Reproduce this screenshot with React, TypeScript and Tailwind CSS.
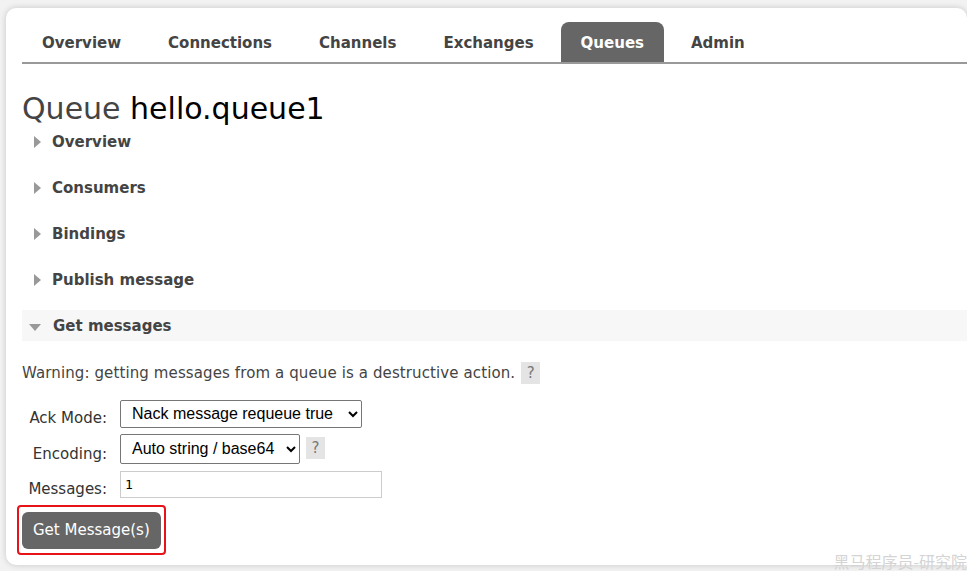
import React from 'react';

const tabs = ['Overview', 'Connections', 'Channels', 'Exchanges', 'Queues', 'Admin'];
const sections = ['Overview', 'Consumers', 'Bindings', 'Publish message'];

function Caret({ open }: { open?: boolean }) {
  if (open) {
    return (
      <svg width="14" height="10" viewBox="0 0 14 10" className="mr-[11px]">
        <polygon points="1,2 13,2 7,9" fill="#999" />
      </svg>
    );
  }
  return (
    <svg width="10" height="14" viewBox="0 0 10 14" className="mr-[10px] ml-[2px]">
      <polygon points="2,1 9,7 2,13" fill="#999" />
    </svg>
  );
}

function Help() {
  return (
    <span className="inline-flex h-[22px] w-[19px] items-center justify-center bg-[#e4e4e4] text-[15px] text-[#777]">
      ?
    </span>
  );
}

const selectFont = { fontFamily: '"Liberation Sans", Arial, sans-serif' };

export default function App() {
  return (
    <div
      className="h-[571px] w-[967px] overflow-hidden bg-[#f2f2f2] pt-[8px] pl-[6px]"
      style={{ fontFamily: '"DejaVu Sans", Verdana, sans-serif' }}
    >
      <div className="h-[557px] w-[961px] rounded-l-[10px] rounded-tr-[10px] bg-white pl-[16px] shadow-[0_0_6px_rgba(0,0,0,0.18)]">
        {/* tabs */}
        <div className="flex border-b-2 border-[#999] pt-[14px]">
          {tabs.map((t) => (
            <div
              key={t}
              className={
                t === 'Queues'
                  ? 'mr-[7px] flex h-[40px] items-center rounded-t-[8px] bg-[#666] px-[20px] pt-[2px] text-[15px] font-bold text-white'
                  : 'mr-[7px] flex h-[40px] items-center px-[20px] pt-[2px] text-[15px] font-bold text-[#444]'
              }
            >
              {t}
            </div>
          ))}
        </div>

        <h1 className="mt-[27px] text-[30px] leading-[36px] text-[#444]">
          Queue <span className="text-black">hello.queue1</span>
        </h1>

        <div className="mt-[5px]">
          {sections.map((s) => (
            <div key={s} className="flex h-[46px] items-start pl-[8px] text-[15px] font-bold text-[#444]">
              <div className="flex h-[20px] items-center">
                <Caret />
                <span>{s}</span>
              </div>
            </div>
          ))}
          <div className="mt-[-6px] flex h-[31px] items-center bg-[#f7f7f7] pt-[2px] pl-[6px] text-[15px] font-bold text-[#444]">
            <Caret open />
            <span>Get messages</span>
          </div>
        </div>

        <div className="mt-[21px] flex items-center gap-[6px] text-[15px] tracking-[0.11px] text-[#444]">
          <span>Warning: getting messages from a queue is a destructive action.</span>
          <Help />
        </div>

        <div className="mt-[15px] flex flex-col gap-[6px] text-[15px] leading-[20px] text-[#333]">
          <div className="flex items-start">
            <span className="mt-[8px] w-[98px] pr-[13px] text-right">Ack Mode:</span>
            <select
              className="h-[28px] w-[242px] rounded-[2px] border border-[#767676] bg-white pr-[2px] pl-[7px] text-[16px] text-black"
              style={selectFont}
              defaultValue="nack"
            >
              <option value="nack">Nack message requeue true</option>
            </select>
          </div>
          <div className="flex items-start">
            <span className="mt-[10px] w-[98px] pr-[13px] text-right">Encoding:</span>
            <select
              className="h-[30px] w-[180px] rounded-[2px] border border-[#767676] bg-white pr-[2px] pl-[7px] text-[16px] text-black"
              style={selectFont}
              defaultValue="auto"
            >
              <option value="auto">Auto string / base64</option>
            </select>
            <span className="ml-[6px] mt-[3px]">
              <Help />
            </span>
          </div>
          <div className="mt-[1px] flex items-start">
            <span className="mt-[8px] w-[98px] pr-[13px] text-right">Messages:</span>
            <input
              className="h-[27px] w-[262px] border border-[#ccc] px-[4px] text-[13px] text-black outline-none"
              style={{ fontFamily: '"DejaVu Sans Mono", monospace' }}
              defaultValue="1"
            />
          </div>
        </div>

        <div className="mt-[6px] ml-[-5px] flex">
          <div className="rounded-[4px] border-2 border-[#e8121b] px-[3px] pt-[5px] pb-[4px]">
            <button className="block h-[37px] rounded-[6px] bg-[#666] px-[11px] text-[15px] text-white">
              Get Message(s)
            </button>
          </div>
        </div>
      </div>
      <div
        className="mt-[-12px] text-right text-[16px] leading-[16px] text-[#d4d4d4]"
        style={{ fontFamily: '"Noto Sans CJK SC", sans-serif' }}
      >
        黑马程序员-研究院
      </div>
    </div>
  );
}
